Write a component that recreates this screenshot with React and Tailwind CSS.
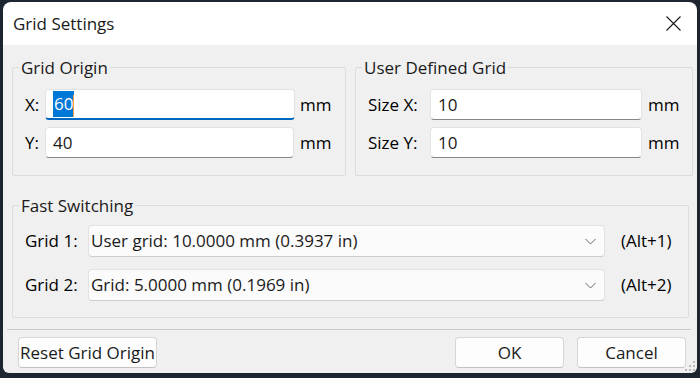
import React from 'react';

const font = { fontFamily: '"Open Sans", "Noto Sans", sans-serif' };

const TextBox = ({ width, children, focused }) => (
    <div
        className={`h-[31px] bg-white rounded-[4px] border border-[#e3e3e3] flex items-center pl-[7px] text-[#1a1a1a] ${focused ? 'border-b-2 border-b-[#0067c0]' : 'border-b-[#868686]'} ${width}`}
    >
        {children}
    </div>
);

const Combo = ({ children }) => (
    <div className="h-[32px] w-[517px] bg-[#fbfbfb] rounded-[4px] border border-[#e2e2e2] border-b-[#cdcdcd] flex items-center pl-[2px] pr-[8px] text-[#1a1a1a]">
        <span className="flex-1 whitespace-nowrap">{children}</span>
        <svg width="11" height="7" viewBox="0 0 11 7" className="mr-[0px]">
            <path d="M0.5 1 L5.5 6 L10.5 1" fill="none" stroke="#6a6a6a" strokeWidth="1" />
        </svg>
    </div>
);

const Group = ({ title, className, children }) => (
    <fieldset className={`border border-[#dcdcdc] rounded-[2px] ${className}`}>
        <legend className="ml-[6px] px-[2px] pt-[2px] leading-[20px] text-[#1a1a1a]">{title}</legend>
        {children}
    </fieldset>
);

const Button = ({ children, className }) => (
    <button className={`h-[31px] bg-[#fdfdfd] border border-[#d6d6d6] border-b-[#c2c2c2] rounded-[4px] text-[#1a1a1a] leading-none ${className}`}>
        {children}
    </button>
);

export default function App() {
    return (
        <div className="w-[700px] h-[378px] bg-[#1d2530] pt-[2px] pl-[3px] overflow-hidden text-[17px]" style={font}>
            <div className="w-[694px] h-[371px] flex flex-col rounded-t-[8px] rounded-b-[6px] overflow-hidden">
                {/* title bar */}
                <div className="h-[43px] bg-white flex items-center justify-between pl-[10px] pr-[16px] shrink-0">
                    <span className="text-[#1a1a1a] pt-[1px]">Grid Settings</span>
                    <svg width="15" height="15" viewBox="0 0 15 15">
                        <path d="M0.5 0.5 L14.5 14.5 M14.5 0.5 L0.5 14.5" stroke="#1a1a1a" strokeWidth="1.1" />
                    </svg>
                </div>

                <div className="flex-1 bg-[#f0f0f0] relative">
                    <div className="flex gap-[9px] pl-[9px] pt-[11px]">
                        <Group title="Grid Origin" className="w-[334px] h-[120px]">
                            <div className="flex flex-col gap-[7px] pl-[12px] mt-[11px]">
                                <div className="flex items-center">
                                    <span className="w-[20px]">X:</span>
                                    <TextBox width="w-[250px]" focused>
                                        <span className="relative bg-[#0078d7] text-white pl-[1px]">
                                            60
                                            <span className="inline-block w-[1px] h-[22px] bg-[#f7a040] align-middle"></span>
                                        </span>
                                    </TextBox>
                                    <span className="ml-[5px]">mm</span>
                                </div>
                                <div className="flex items-center">
                                    <span className="w-[20px]">Y:</span>
                                    <TextBox width="w-[249px]">40</TextBox>
                                    <span className="ml-[6px]">mm</span>
                                </div>
                            </div>
                        </Group>

                        <Group title="User Defined Grid" className="w-[338px] h-[120px]">
                            <div className="flex flex-col gap-[7px] pl-[12px] mt-[11px]">
                                <div className="flex items-center">
                                    <span className="w-[62px]">Size X:</span>
                                    <TextBox width="w-[212px]">10</TextBox>
                                    <span className="ml-[6px]">mm</span>
                                </div>
                                <div className="flex items-center">
                                    <span className="w-[62px]">Size Y:</span>
                                    <TextBox width="w-[212px]">10</TextBox>
                                    <span className="ml-[6px]">mm</span>
                                </div>
                            </div>
                        </Group>
                    </div>

                    <div className="pl-[9px] mt-[18px]">
                        <Group title="Fast Switching" className="w-[677px] h-[124px]">
                            <div className="flex flex-col gap-[12px] pl-[12px] mt-[9px]">
                                <div className="flex items-center">
                                    <span className="w-[63px]">Grid 1:</span>
                                    <Combo>User grid: 10.0000 mm (0.3937 in)</Combo>
                                    <span className="ml-[16px]">(Alt+1)</span>
                                </div>
                                <div className="flex items-center">
                                    <span className="w-[63px]">Grid 2:</span>
                                    <Combo>Grid: 5.0000 mm (0.1969 in)</Combo>
                                    <span className="ml-[16px]">(Alt+2)</span>
                                </div>
                            </div>
                        </Group>
                    </div>

                    <div className="ml-[4px] mt-[11px] w-[684px] h-[1px] bg-[#cacaca]"></div>

                    <div className="flex items-center mt-[7px] pl-[15px]">
                        <Button className="w-[139px]">Reset Grid Origin</Button>
                        <div className="flex-1"></div>
                        <Button className="w-[109px]">OK</Button>
                        <Button className="w-[109px] ml-[13px] mr-[11px]">Cancel</Button>
                    </div>

                    {/* resize grip */}
                    <svg width="12" height="12" viewBox="0 0 12 12" className="absolute right-0 bottom-0">
                        <rect x="8" y="0" width="2" height="2" fill="#bdbdbd" />
                        <rect x="4" y="4" width="2" height="2" fill="#bdbdbd" />
                        <rect x="8" y="4" width="2" height="2" fill="#bdbdbd" />
                        <rect x="0" y="8" width="2" height="2" fill="#bdbdbd" />
                        <rect x="4" y="8" width="2" height="2" fill="#bdbdbd" />
                        <rect x="8" y="8" width="2" height="2" fill="#bdbdbd" />
                    </svg>
                </div>
            </div>
        </div>
    );
}
